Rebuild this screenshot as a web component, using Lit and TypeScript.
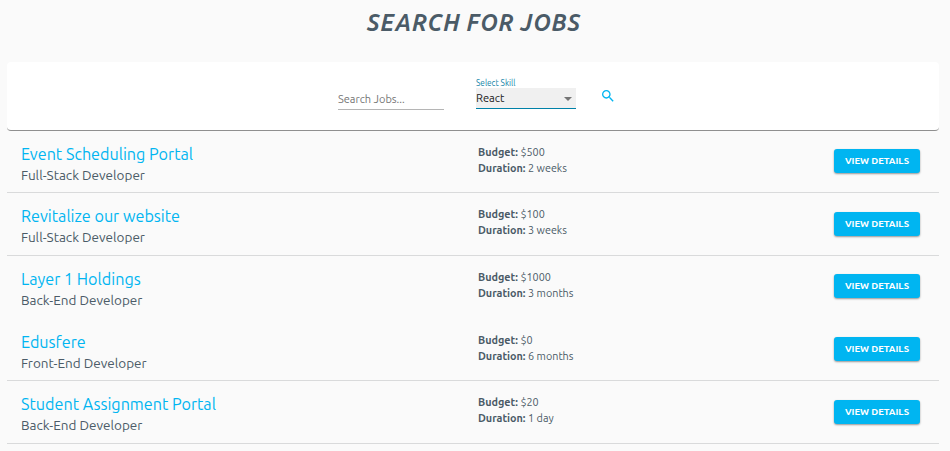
import { LitElement, html, css } from "lit";
import { customElement } from "lit/decorators.js";

interface Job {
  title: string;
  role: string;
  budget: string;
  duration: string;
  open?: boolean;
}

const JOBS: Job[] = [
  { title: "Event Scheduling Portal", role: "Full-Stack Developer", budget: "$500", duration: "2 weeks" },
  { title: "Revitalize our website", role: "Full-Stack Developer", budget: "$100", duration: "3 weeks" },
  { title: "Layer 1 Holdings", role: "Back-End Developer", budget: "$1000", duration: "3 months", open: true },
  { title: "Edusfere", role: "Front-End Developer", budget: "$0", duration: "6 months" },
  { title: "Student Assignment Portal", role: "Back-End Developer", budget: "$20", duration: "1 day" },
];

@customElement("app-root")
export class AppRoot extends LitElement {
  static styles = css`
    :host {
      display: block;
      box-sizing: border-box;
      height: 451px;
      overflow: hidden;
      padding: 0 11px 0 7px;
      background: #fafafa;
      color: #4b5b67;
      font-family: Ubuntu, "Noto Sans", sans-serif;
    }
    .heading {
      margin: 0;
      height: 62px;
      padding: 9px 0 0 2px;
      box-sizing: border-box;
      text-align: center;
      font-size: 23px;
      line-height: 28px;
      font-weight: 700;
      font-style: italic;
      letter-spacing: 0.8px;
    }
    .filters {
      display: flex;
      box-sizing: border-box;
      height: 68.8px;
      padding-left: 331px;
      background: #fff;
      border-bottom: 1px solid #8f8f8f;
      border-radius: 4px;
    }
    .search {
      width: 106px;
      height: 20px;
      margin-top: 27px;
      border-bottom: 1px solid #b5b5b5;
      font-size: 11px;
      line-height: 20px;
      color: #757575;
      white-space: nowrap;
    }
    .skill {
      width: 100px;
      margin: 16px 24px 0 32px;
    }
    .label {
      height: 10px;
      font-size: 8.25px;
      line-height: 11px;
      color: #1585a8;
    }
    .select {
      display: flex;
      align-items: center;
      justify-content: space-between;
      height: 20px;
      padding-right: 4px;
      background: #f0f0f0;
      border-bottom: 1px solid #0081a8;
      font-size: 11.2px;
      color: #1a1a1a;
    }
    .arrow {
      border: 4px solid transparent;
      border-top-color: #757575;
      border-bottom: 0;
      margin-top: 2px;
    }
    .find {
      width: 16px;
      height: 16px;
      margin-top: 26px;
      fill: #00b5f1;
    }
    .job {
      display: grid;
      grid-template-columns: 457px 1fr 86px;
      box-sizing: border-box;
      height: 62.63px;
      padding: 0 19px 0 14px;
      border-bottom: 1px solid #d9dadb;
    }
    .job.open {
      border-bottom-color: transparent;
    }
    .title {
      margin-top: 12px;
      font-size: 16.16px;
      line-height: 22px;
      color: #00b5f1;
    }
    .role {
      font-size: 13.5px;
      line-height: 20px;
    }
    .facts {
      padding-top: 13px;
      font-size: 10.8px;
      line-height: 16px;
    }
    .view {
      height: 24px;
      margin-top: 18.4px;
      padding: 0;
      border: 0;
      border-radius: 3px;
      background: #00b5f1;
      box-shadow: 0 1px 2px rgba(0, 0, 0, 0.4);
      color: #fff;
      font: 700 9.5px/24px Ubuntu, "Noto Sans", sans-serif;
    }
  `;

  render() {
    return html`
      <h1 class="heading">SEARCH FOR JOBS</h1>
      <div class="filters">
        <div class="search"><span>Search Jobs...</span></div>
        <div class="skill">
          <div class="label">Select Skill</div>
          <div class="select"><span>React</span><i class="arrow"></i></div>
        </div>
        <svg class="find" viewBox="0 0 24 24"><path d="M15.5 14h-.79l-.28-.27C15.41 12.59 16 11.11 16 9.5 16 5.91 13.09 3 9.5 3S3 5.91 3 9.5 5.91 16 9.5 16c1.61 0 3.09-.59 4.23-1.57l.27.28v.79l5 4.99L20.49 19l-4.99-5zm-6 0C7.01 14 5 11.99 5 9.5S7.01 5 9.5 5 14 7.01 14 9.5 11.99 14 9.5 14z"/></svg>
      </div>
      ${JOBS.map(
        (j) => html`<div class="job ${j.open ? "open" : ""}">
          <div>
            <div class="title">${j.title}</div>
            <div class="role">${j.role}</div>
          </div>
          <div class="facts">
            <div><b>Budget:</b> ${j.budget}</div>
            <div><b>Duration:</b> ${j.duration}</div>
          </div>
          <button class="view">VIEW DETAILS</button>
        </div>`
      )}
    `;
  }
}
